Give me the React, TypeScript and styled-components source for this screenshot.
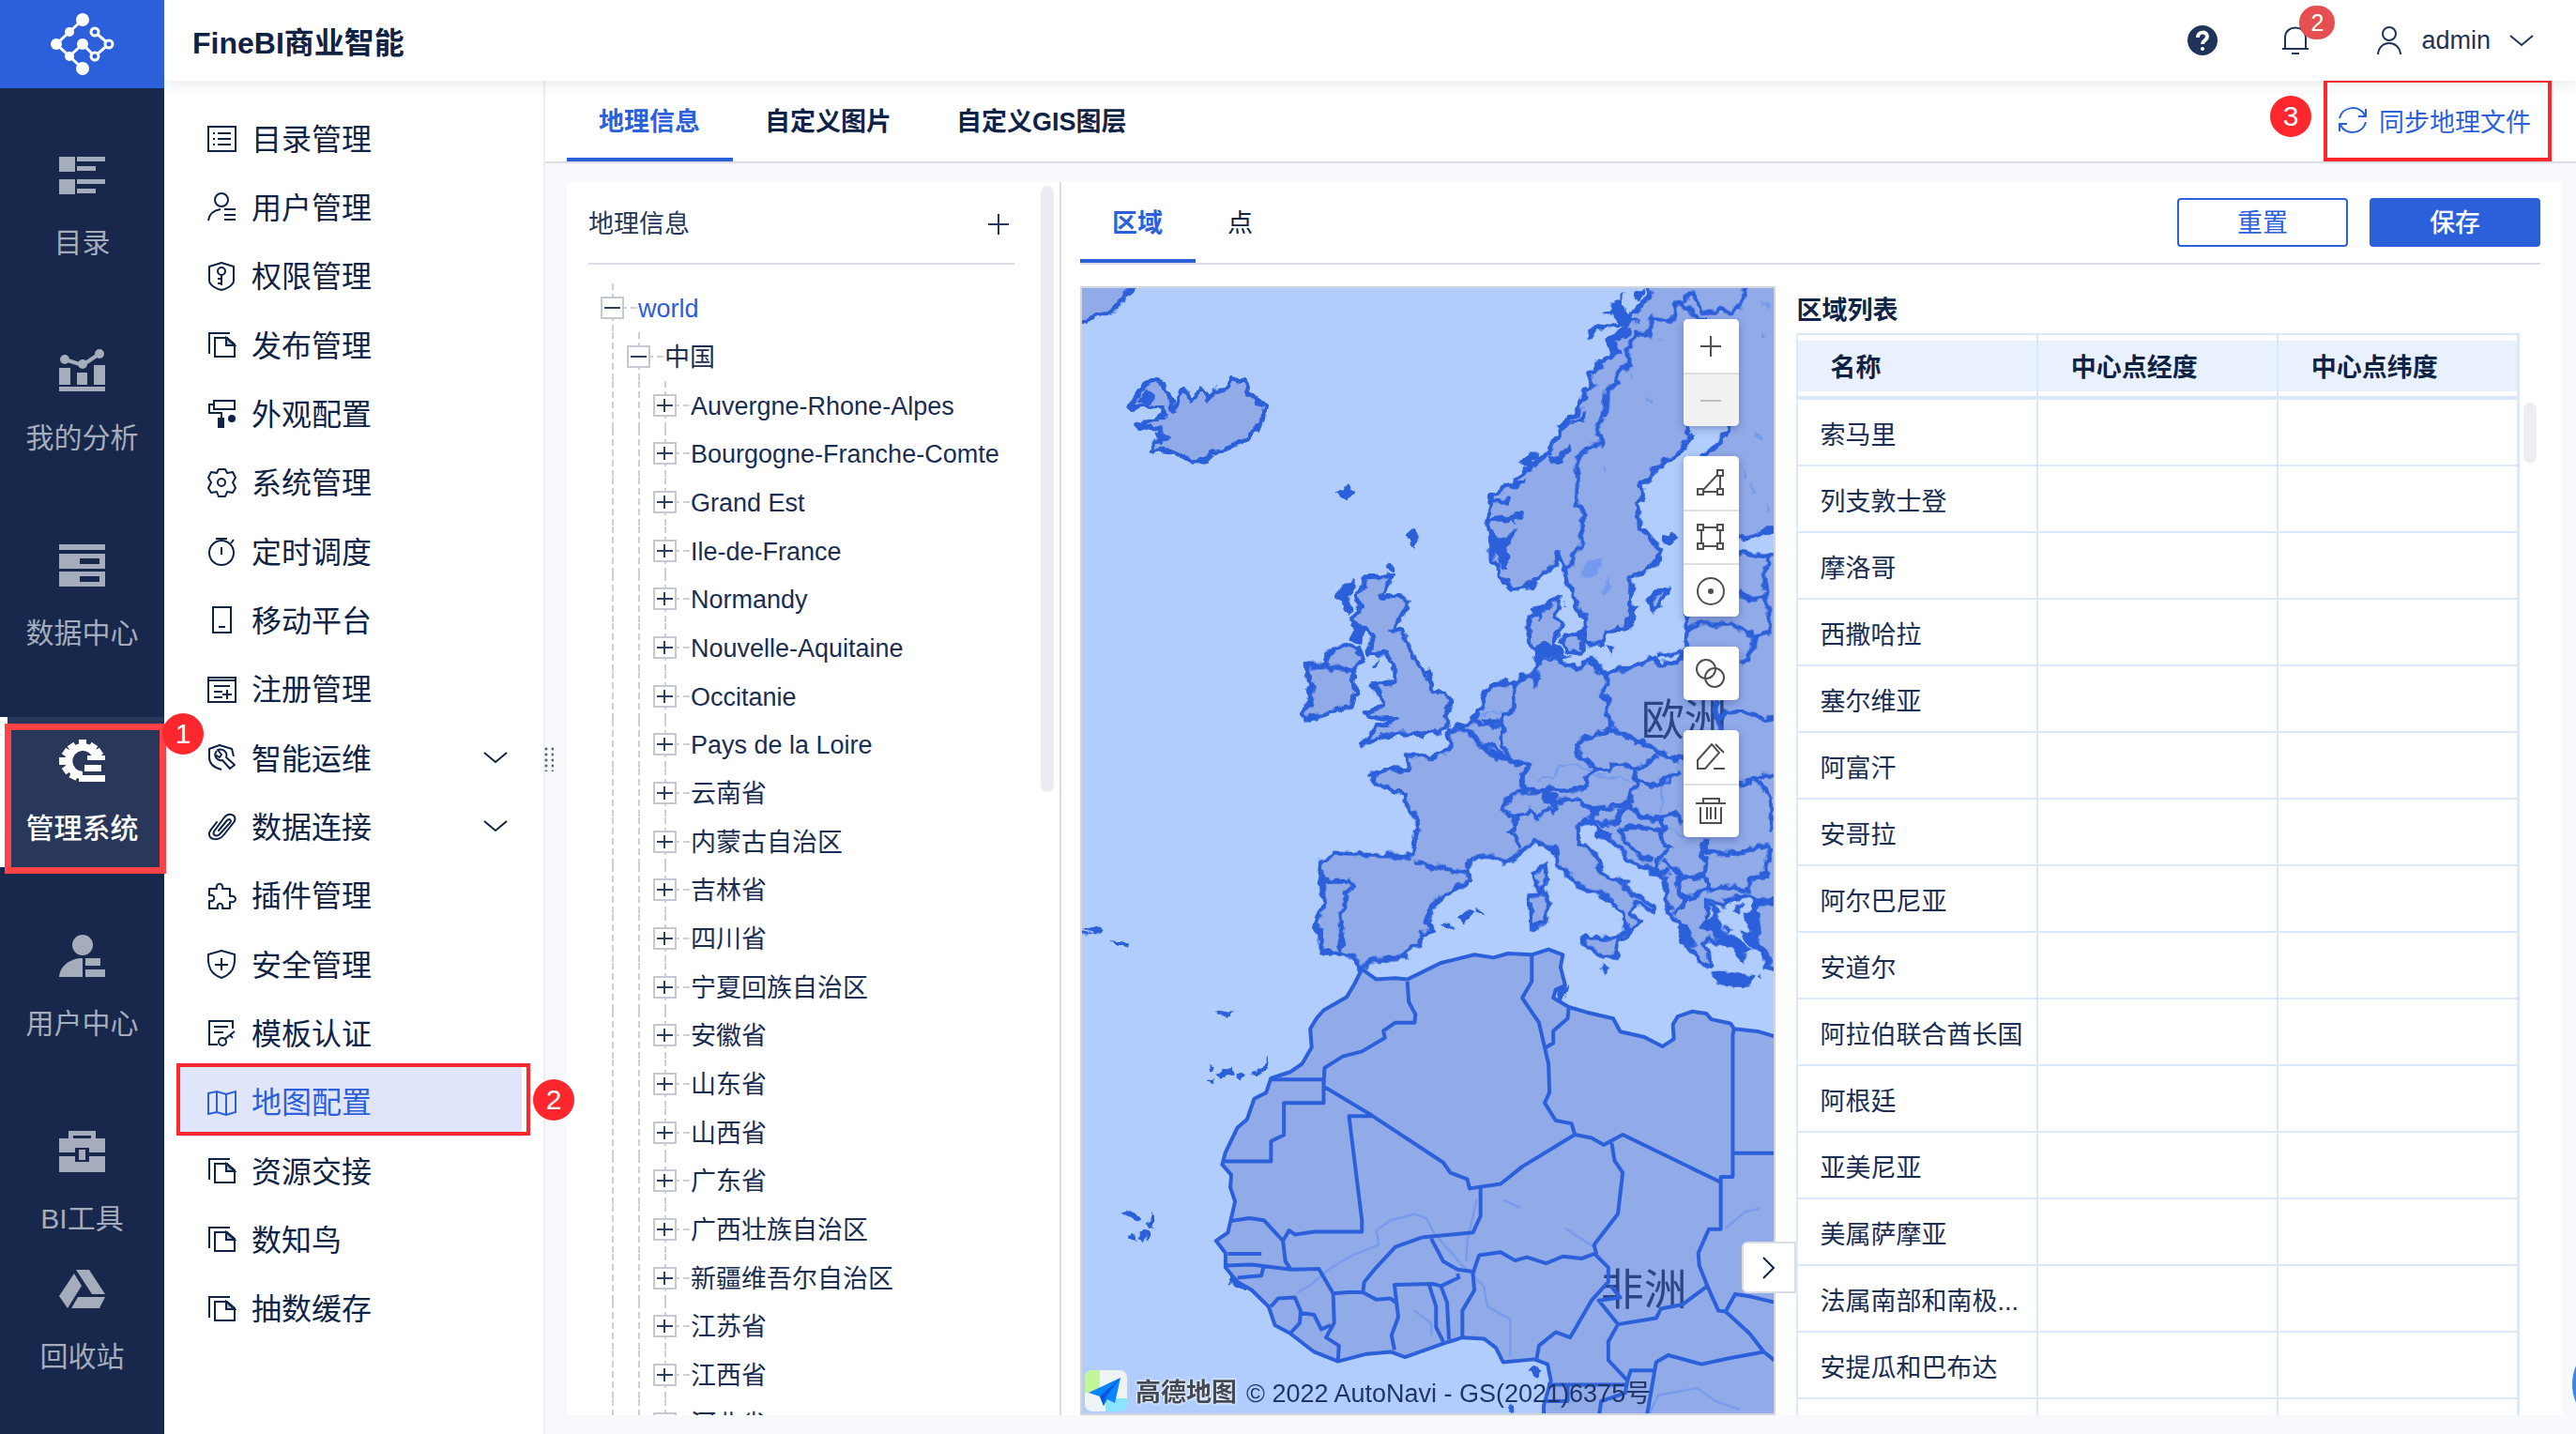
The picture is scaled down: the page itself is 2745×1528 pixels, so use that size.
import React from 'react';
import styled, { createGlobalStyle, css } from 'styled-components';

const blue = '#2c60db';
const navy = '#0f2347';
const red = '#ff272e';
const line = '#dadde6';
const grid = '#dbe8f9';

const Global = createGlobalStyle`
  *, *::before, *::after { box-sizing: border-box; }
  body { margin: 0; }
  body, button { font-family: "Liberation Sans", "Noto Sans CJK SC", sans-serif; }
  button { padding: 0; border: 0; background: none; color: inherit; font-size: 27px; cursor: pointer; }
  svg { display: block; flex: none; }
`;

const Page = styled.div`
  display: flex;
  height: 100vh;
  overflow: hidden;
  position: relative;
  background: #fff;
  color: ${navy};
  font-size: 27px;
  line-height: 40px;
`;

/* ---------- left rail ---------- */
const Rail = styled.nav`
  display: flex;
  flex-direction: column;
  flex: none;
  width: 175px;
  background: #17284c;
  position: relative;
  z-index: 3;
`;
const Brand = styled.div`
  display: grid;
  place-items: center;
  flex: none;
  height: 94px;
  margin-bottom: 46px;
  background: ${blue};
`;
const RailItem = styled.button<{ $on?: boolean; $tight?: boolean }>`
  position: relative;
  display: flex;
  flex-direction: column;
  align-items: center;
  flex: none;
  gap: 29px;
  height: 160px;
  padding-top: 24px;
  margin-bottom: ${p => (p.$tight ? '-13px' : '48px')};
  font-size: 30px;
  line-height: 40px;
  color: ${p => (p.$on ? '#fff' : '#a5adbc')};
  ${p => p.$on && css`
    background: #28375a;
    font-weight: 500;
    box-shadow: inset 8px 0 #fff;
  `}
`;

/* ---------- call-outs ---------- */
const Frame = styled.span<{ $t: number; $r: number; $b: number; $l: number; $w: number }>`
  position: absolute;
  top: ${p => p.$t}px;
  right: ${p => p.$r}px;
  bottom: ${p => p.$b}px;
  left: ${p => p.$l}px;
  border: ${p => p.$w}px solid ${p => (p.$w > 5 ? '#ff4246' : red)};
  pointer-events: none;
`;
const Step = styled.span<{ $x: number; $y: number }>`
  position: absolute;
  left: ${p => p.$x}px;
  top: ${p => p.$y}px;
  z-index: 4;
  width: 44px;
  height: 44px;
  border-radius: 50%;
  background: ${red};
  color: #fff;
  font-size: 30px;
  font-weight: 400;
  line-height: 44px;
  text-align: center;
`;

/* ---------- header ---------- */
const Body = styled.div`
  display: flex;
  flex-direction: column;
  flex: 1;
  min-width: 0;
`;
const Header = styled.header`
  display: flex;
  align-items: center;
  flex: none;
  height: 86px;
  padding: 0 45px 0 30px;
  background: #fff;
  box-shadow: 0 2px 18px rgba(30, 50, 80, 0.12);
  position: relative;
  z-index: 2;
`;
const Title = styled.h1`
  flex: 1;
  margin: 6px 0 0;
  font-size: 32px;
  line-height: 44px;
`;
const HeadIcon = styled.button`
  position: relative;
  margin-right: 69px;
`;
const Count = styled.span`
  position: absolute;
  left: 18px;
  top: -22px;
  width: 38px;
  height: 36px;
  border-radius: 18px;
  background: #e64f4f;
  color: #fff;
  font-size: 25px;
  line-height: 36px;
`;
const Account = styled.button`
  display: flex;
  align-items: center;
  gap: 20px;
  margin-left: 4px;
  color: #20345a;
`;

/* ---------- side menu ---------- */
const Row = styled.div`
  display: flex;
  flex: 1;
  min-height: 0;
`;
const Menu = styled.aside`
  position: relative;
  z-index: 1;
  flex: none;
  width: 406px;
  padding: 25px 23px 0 17px;
  border-right: 2px solid #eceef4;
`;
const MenuItem = styled.button<{ $on?: boolean }>`
  position: relative;
  display: flex;
  align-items: center;
  gap: 16px;
  width: 100%;
  height: 73px;
  padding: 0 15px 0 29px;
  font-size: 32px;
  text-align: left;
  color: ${p => (p.$on ? blue : navy)};
  background: ${p => (p.$on ? '#e0e5f9' : 'none')};
  &:nth-child(3n) { height: 74px; }
`;
const MenuText = styled.span`
  flex: 1;
  padding-bottom: 4px;
`;
const Grip = styled.span`
  position: absolute;
  right: -11px;
  top: 710px;
  width: 10px;
  height: 26px;
  background: radial-gradient(circle at 2px 2px, #5b6880 1px, transparent 2px) 0 0 / 7px 6px;
`;

/* ---------- main area ---------- */
const Main = styled.main`
  display: flex;
  flex-direction: column;
  flex: 1;
  min-width: 0;
  background: #f7f9fd;
`;
const TabBar = styled.div`
  display: flex;
  flex: none;
  height: 88px;
  padding: 0 48px 0 23px;
  background: #fff;
  border-bottom: 2px solid ${line};
`;
const Tab = styled.button<{ $on?: boolean; $plain?: boolean }>`
  padding: 0 35px 0 34px;
  font-weight: ${p => (p.$plain ? 400 : 700)};
  color: ${p => (p.$on ? blue : navy)};
  border-bottom: 4px solid ${p => (p.$on ? blue : 'transparent')};
`;
const Sync = styled.button`
  position: relative;
  display: flex;
  align-items: center;
  gap: 12px;
  padding-bottom: 2px;
  margin-left: auto;
  color: ${blue};
`;
const Panels = styled.div`
  display: flex;
  flex: 1;
  min-height: 0;
  margin: 20px 15px 20px 23px;
  background: #fff;
`;

/* ---------- tree ---------- */
const TreePanel = styled.section`
  display: flex;
  flex: none;
  width: 527px;
  padding: 0 6px 0 23px;
  border-right: 2px solid ${line};
`;
const TreeCol = styled.div`
  flex: 1;
  overflow: hidden;
`;
const TreeHead = styled.div`
  display: flex;
  align-items: center;
  justify-content: space-between;
  height: 88px;
  padding: 3px 5px 0 0;
  border-bottom: 2px solid ${line};
  color: #24365a;
`;
const Thumb = styled.div<{ $h: number }>`
  flex: none;
  width: 14px;
  height: ${p => p.$h}px;
  border-radius: 7px;
  background: #ecedf2;
`;
const TreeThumb = styled(Thumb)`
  margin: 4px 0 0 28px;
`;
const Tree = styled.ul`
  margin: 0;
  padding: 20px 0 0 13px;
  list-style: none;
  white-space: nowrap;
`;
const Node = styled.li`
  display: flex;
  align-items: center;
  height: 52px;
  &:nth-child(3n) { height: 51px; }
`;
const dashes = css`
  background: repeating-linear-gradient(#cdd0d6 0 7px, transparent 7px 11px) 12px 0 / 2px 100% no-repeat;
`;
const Guide = styled.span`
  align-self: stretch;
  width: 28px;
  ${dashes}
`;
const ToggleCell = styled.span`
  display: flex;
  align-items: center;
  align-self: stretch;
  ${dashes}
`;
const Toggle = styled.button`
  display: grid;
  place-items: center;
  width: 25px;
  height: 24px;
  border: 2px solid #c4c8d0;
  background: #fff;
`;
const Dash = styled.span`
  width: 14px;
  height: 2px;
  margin-right: 1px;
  background: linear-gradient(90deg, #cdd0d6 3px, transparent 3px 7px, #cdd0d6 7px);
`;
const Label = styled.span<{ $on?: boolean }>`
  padding-top: 2px;
  color: ${p => (p.$on ? blue : '#1a2d53')};
`;

/* ---------- right workspace ---------- */
const Work = styled.section`
  display: flex;
  flex-direction: column;
  flex: 1;
  min-width: 0;
  padding: 0 23px 0 20px;
`;
const WorkBar = styled.div`
  display: flex;
  flex: none;
  height: 88px;
  border-bottom: 2px solid ${line};
`;
const Actions = styled.div`
  display: flex;
  align-items: center;
  gap: 23px;
  margin-left: auto;
`;
const Action = styled.button<{ $primary?: boolean }>`
  width: 182px;
  height: 52px;
  padding-bottom: 3px;
  border: 2px solid ${blue};
  border-radius: 4px;
  background: ${p => (p.$primary ? blue : '#fff')};
  color: ${p => (p.$primary ? '#fff' : blue)};
  font-weight: ${p => (p.$primary ? 500 : 400)};
`;
const Split = styled.div`
  display: flex;
  flex: 1;
  min-height: 0;
  gap: 22px;
  padding-top: 23px;
`;
const MapBox = styled.div`
  position: relative;
  flex: 738 1 0;
  border: 2px solid #d2d5de;
`;
const MapSvg = styled.svg`
  width: 100%;
  height: 100%;
  background: #b1cdfe;
`;
const Tools = styled.div`
  position: absolute;
  top: 33px;
  right: 37px;
  display: flex;
  flex-direction: column;
  gap: 32px;
`;
const ToolGroup = styled.div`
  border-radius: 5px;
  overflow: hidden;
  background: #fff;
  box-shadow: 0 3px 10px rgba(20, 40, 100, 0.35);
`;
const Tool = styled.button<{ $off?: boolean }>`
  display: grid;
  place-items: center;
  width: 59px;
  height: 57px;
  color: ${p => (p.$off ? '#bdbdbd' : '#505050')};
  background: ${p => (p.$off ? '#f1f1f1' : '#fff')};
  & + & { border-top: 2px solid #dedfe2; }
`;
const Credit = styled.div`
  position: absolute;
  left: 3px;
  bottom: 1px;
  display: flex;
  align-items: center;
  white-space: nowrap;
  color: #1f3567;
`;
const CreditText = styled.span`
  padding-top: 6px;
`;
const Amap = styled.b`
  padding-top: 4px;
  margin: 0 10px 0 9px;
  color: #444a55;
  text-shadow: 0 0 3px #fff, 0 0 3px #fff;
`;
const Fold = styled.button`
  position: absolute;
  right: -24px;
  bottom: 128px;
  display: grid;
  place-items: center;
  width: 58px;
  height: 55px;
  border: 2px solid ${line};
  border-radius: 6px 0 0 6px;
  background: #fff;
`;
const ListCol = styled.div`
  display: flex;
  flex-direction: column;
  flex: 795 1 0;
  min-width: 0;
  overflow: hidden;
`;
const ListTitle = styled.h2`
  flex: none;
  margin: 6px 0 4px 1px;
  font-size: 27px;
  line-height: 40px;
`;
const ListRow = styled.div`
  display: grid;
  grid-template-columns: minmax(0, 1fr) auto;
  gap: 4px;
`;
const Table = styled.table`
  width: 100%;
  table-layout: fixed;
  border-spacing: 0;
  border: solid ${grid};
  border-width: 2px 1px 0 2px;
`;
const Th = styled.th`
  height: 69px;
  padding: 6px 0 5px;
  background: #e8f1fd content-box;
  border: solid ${grid};
  border-width: 0 2px 4px 0;
  text-align: left;
  text-indent: 35px;
  line-height: 54px;
`;
const ThText = styled.div`
  height: 54px;
  padding-top: 2px;
`;
const Td = styled.td`
  height: 71px;
  padding: 6px 12px 0 24px;
  border: solid ${grid};
  border-width: 0 2px 2px 0;
  overflow: hidden;
  white-space: nowrap;
  text-overflow: ellipsis;
  color: #1a2d53;
`;
const ListThumb = styled(Thumb)`
  margin: 74px 4px 0 0;
`;
const Bubble = styled.button`
  position: absolute;
  right: -96px;
  bottom: 3px;
  z-index: 5;
  width: 100px;
  height: 100px;
  border-radius: 50%;
  background: #3a84f0;
`;

/* ---------- icons ---------- */
type Kids = { children: React.ReactNode };
const RailSvg = ({ children }: Kids) => (
  <svg width="49" height="46" viewBox="0 0 49 46" fill="currentColor">{children}</svg>
);
const MenuSvg = ({ children }: Kids) => (
  <svg width="31" height="31" viewBox="0 0 31 31" fill="none" stroke="currentColor" strokeWidth="2">{children}</svg>
);
const ToolSvg = ({ children }: Kids) => (
  <svg width="34" height="34" viewBox="0 0 34 34" fill="none" stroke="currentColor" strokeWidth="2">{children}</svg>
);

const railItems = [
  { t: '目录', i: <path d="M0 3h17v16H0zM19 3h30v5H19zM19 13h20v5H19zM0 27h17v16H0zM19 27h30v5H19zM19 37h20v5H19z" /> },
  {
    t: '我的分析',
    i: (
      <>
        <path d="M0 20h12v18H0zM19 25h11v13H19zM37 17h12v21H37zM0 40h49v5H0z" />
        <path d="M6 11l19 6 18-12" fill="none" stroke="currentColor" strokeWidth="4" />
        <circle cx="6" cy="11" r="5" /><circle cx="25" cy="16" r="5" /><circle cx="43" cy="5" r="5" />
      </>
    ),
  },
  { t: '数据中心', i: <path fillRule="evenodd" d="M0 0h49v6H0zM0 10h49v16H0zM22 15v6h21v-6zM0 29h49v16H0zM22 34v6h21v-6z" /> },
  {
    t: '管理系统',
    i: (
      <>
        <g fill="none" stroke="currentColor">
          <path d="M40 20A15 15 0 1 0 25 38" strokeWidth="8" />
          <path d="M25 0v7M12 5l4 6M38 5l-4 6M5 12l6 4M45 12l-6 4M0 23h8M5 34l6-4M14 42l3-6M25 45v-7" strokeWidth="8" />
        </g>
        <path d="M30 17h19v5H30zM27 27h18v7H27zM25 38h24v7H25z" />
      </>
    ),
  },
  { t: '用户中心', i: <><circle cx="25" cy="11" r="11" /><path d="M0 45C1 33 12 25 25 25v20zM28 25h16v8H28zM28 37h21v8H28z" /></> },
  { t: 'BI工具', i: <path fillRule="evenodd" d="M10 9V1h29v8h10v15H32v-5H17v5H0V9zM15 9h19V6H15zM0 28h17v6h15v-6h17v17H0zM21 21h7v11h-7z" /> },
  { t: '回收站', i: <path d="M18 2h14l17 26H35zM16 6l8 13L9 43 0 30zM20 31h29l-6 12H13z" /> },
];

const pages = <><path d="M24 3H2v22M8 8h13l8 7v13H8z" /><path d="M20 8v8h9z" fill="currentColor" fillOpacity="0.3" /></>;
const menuItems = [
  { t: '目录管理', i: <><rect x="1" y="3" width="29" height="26" /><path d="M11 10h14M11 16h14M11 22h14M6 10h2M6 16h2M6 22h2" /></> },
  { t: '用户管理', i: <><circle cx="15" cy="8" r="7" /><path d="M1 30c1-7 6-11 13-12M18 18h12M18 24h12M18 29h12" /></> },
  { t: '权限管理', i: <><path d="M15 1l13 4v15c0 5-8 9-13 10C10 29 2 25 2 20V5z" /><circle cx="15" cy="10" r="4" /><path d="M15 14v11M11 18h4M11 23h4" /></> },
  { t: '发布管理', i: pages },
  { t: '外观配置', i: <><path d="M7 2h22v9H7zM7 6H2v9h13v6" /><path d="M12 21h5v9h-5z" fill="currentColor" /><circle cx="26" cy="21" r="3" fill="currentColor" /></> },
  { t: '系统管理', i: <><path d="M12 1h7l2 4 6-1 3 6-3 5 3 6-3 5-6-1-2 5h-7l-2-5-6 1-3-5 3-6-3-5 3-6 6 1z" strokeLinejoin="round" /><circle cx="15" cy="15" r="4" /></> },
  { t: '定时调度', i: <><circle cx="15" cy="17" r="13" /><path d="M15 11v8M9 2h12M25 7l3-4" /></> },
  { t: '移动平台', i: <path d="M6 2h19v27H6zM12 23h7" /> },
  { t: '注册管理', i: <path d="M1 3h29v26H1zM1 6h29M7 12h17M7 18h9M7 24h9M21 16v10M16 21h10" /> },
  { t: '智能运维', g: true, i: <path d="M15 28C7 26 2 22 2 15V6l11-4 13 4 2 8M10 8c-4 5 0 11 6 10l8 9 5-4-9-8c2-6-4-10-9-8l4 5-2 3-5-3" strokeLinejoin="round" /> },
  { t: '数据连接', g: true, i: <path d="M12 20l9-11c3-2 5 0 3 3L13 24c-3 3-8 1-6-3L18 6c5-6 13-3 11 4L18 24c-6 8-17 6-16-1 0-3 4-6 8-12" strokeLinecap="round" /> },
  { t: '插件管理', i: <path d="M2 8h8c-2-7 8-7 6 0h8v8c8-2 8 8 0 6v7h-8c2-7-7-7-5 0H2v-8c7 2 7-8 0-6z" strokeLinejoin="round" /> },
  { t: '安全管理', i: <><path d="M15 1l14 4c1 14-3 21-14 25C4 26 0 19 1 5z" /><path d="M15 9v13M8 16h14" /></> },
  { t: '模板认证', i: <><path d="M11 28H2V3h25v8M2 3v25M7 9h15M7 15h10" /><circle cx="16" cy="25" r="4" /><path d="M19 22l10-8M24 18l3 3" /></> },
  { t: '地图配置', on: true, i: <path d="M1 6l9-2 10 3 10-3v22l-10 3-10-3-9 2zM10 4v22M20 7v22" /> },
  { t: '资源交接', i: pages },
  { t: '数知鸟', i: pages },
  { t: '抽数缓存', i: pages },
];

const Chevron = () => (
  <svg width="26" height="13" viewBox="0 0 26 13" fill="none" stroke="currentColor" strokeWidth="2"><path d="M1 1l12 10L25 1" /></svg>
);

/* ---------- map drawing ---------- */
const LAND = '#91aae8';

const sheets = {
  north: 'translate(1130 180) scale(.5102 .4337)',
  south: 'translate(1130 840) scale(.5102 .4388)',
  nordic: 'translate(1580 300) scale(.33333)',
  balkan: 'translate(1580 700) scale(.33333)',
};
type Sheet = keyof typeof sheets;

/* coast: outline with a line; close: remaining fill boundary without a line */
const lands: { s: Sheet; coast: string; close?: string }[] = [
  { s: 'north', coast: 'M30 382L45 375 105 352 130 325 135 305 170 280', close: 'L30 280' },
  { s: 'north', coast: 'M145 585L175 530 205 520 225 545 235 600 258 540 275 568 295 535 310 565 322 545 350 535 358 515 385 525 392 545 400 560 427 585 422 620 400 655 365 680 318 700 298 720 255 710 232 690 192 695 190 670 222 662 205 640 160 630 218 608 215 590 175 582Z' },
  { s: 'north', coast: 'M640 1003L695 1000 668 1050 722 1052 726 1062 708 1110 690 1135 715 1140 735 1185 740 1205 768 1240 778 1285 805 1288 817 1308 805 1340 808 1368 790 1385 740 1390 700 1388 665 1400 630 1420 660 1370 690 1360 705 1350 665 1352 640 1340 672 1318 665 1290 655 1270 698 1262 697 1225 680 1190 645 1192 655 1150 632 1130 610 1110 628 1075 618 1050 632 1030Z' },
  { s: 'north', coast: 'M512 1220L550 1222 560 1190 590 1170 620 1178 632 1205 610 1235 615 1290 608 1320 560 1335 515 1355 505 1335 530 1310 515 1290 530 1270 515 1240Z' },
  { s: 'nordic', coast: 'M560 -10L540 18 520 60 475 110 455 150 405 190 425 230 395 245 362 275 345 295 345 330 330 350 312 400 300 425 270 455 240 490 205 550 160 590 120 620 85 655 30 680 20 740 15 765 25 800 28 900 48 910 52 945 80 965 95 985 150 975 200 930 232 912 243 870 262 915 270 960 300 1030 330 1085 335 1158 385 1160 390 1130 405 1115 455 1110 475 1040 478 945 515 925 550 905 570 860 528 800 503 790 498 715 515 690 512 650 545 615 560 590 640 540 668 490 655 465 690 400 750 360 790 465 745 530 705 555 690 620 700 740 780 800 830 820 870 810 925 795 960 790', close: 'L960 -10' },
  { s: 'north', coast: 'M722 1568L720 1540 690 1525 655 1508 648 1490 680 1475 735 1478 722 1440 775 1448 812 1425 812 1380 850 1365 875 1340 888 1290 905 1265 950 1262 960 1250 990 1250 1000 1215 980 1165 978 1105 1005 1085 1042 1048 1035 1100 1052 1118 1035 1150 1028 1190 1050 1215 1080 1225 1110 1210 1140 1240 1180 1228 1240 1200 1250 1218 1290 1210 1310 1180 1305 1110 1320 1060 1360 1000 1420 942 1450 950 1520 950', close: 'L1520 1570H722' },
  { s: 'south', coast: 'M722 42L740 60 752 100 742 110 735 165 680 165 620 162 575 158 540 178 548 225 550 290 530 340 545 355 545 400 585 400 610 410 630 437 660 415 720 412 735 385 752 380 755 355 775 345 765 310 795 265 855 225 852 180 872 165 884 168', close: 'L884 42' },
  { s: 'balkan', coast: 'M0 638L35 640 70 658 100 645 170 590 225 612 238 665 265 690 330 745 375 755 415 785 445 815 462 870 440 905 460 905 478 870 500 850 478 820 490 785 545 815 545 795 450 740 460 718 400 710 370 660 355 625 310 600 312 535 350 520 370 570 405 575 430 610 480 655 545 690 585 715 582 780 605 830 640 870 640 910 670 945 690 970 730 990 725 945 700 920 720 900 790 920 760 880 700 865 720 840 715 780 770 790 820 770 855 765 875 780 950 780', close: 'L950 478H0' },
  { s: 'balkan', coast: 'M960 790L880 790 850 830 880 860 850 890 890 930 915 960 910 1000 960 990' },
  { s: 'balkan', coast: 'M200 665L165 690 170 730 188 750 205 715ZM150 765L200 755 213 785 205 850 155 865 155 830ZM315 905L330 895 380 905 440 895 420 965 385 955 340 930ZM745 1015L860 1025 855 1045 800 1045 745 1030Z' },
  { s: 'nordic', coast: 'M255 1140L300 1125 325 1150 310 1190 270 1180ZM540 1055L535 1020 555 992 595 990 570 1015 568 1035Z' },
];
const africa = {
  coast: 'M1520 606L1488 602 1460 592 1408 585 1400 572 1360 562 1350 548 1320 543 1290 555 1280 575 1282 610 1258 628 1220 605 1170 592 1155 560 1100 545 1062 532 1045 520 1030 510 1035 490 1055 480 1045 435 1050 405 1020 392 985 405 935 402 905 412 865 405 795 425 725 465 700 462 660 465 630 440 615 475 598 508 550 540 535 560 522 585 525 630 505 670 480 690 440 705 430 740 405 755 390 805 370 825 345 885 338 915 357 940 355 970 365 1005 350 1080 325 1100 345 1130 345 1165 370 1200 400 1220 435 1260 448 1305 480 1325 530 1370 580 1393 640 1375 690 1370 720 1383 800 1350 840 1335 885 1338 910 1360 925 1395 990 1388 1018 1400 1025 1440 1010 1500 1010 1540',
  close: 'L1520 1540',
};

const borders: { s: Sheet; d: string }[] = [
  { s: 'nordic', d: 'M285 915L290 870 320 835 318 770 332 745 305 710 308 640 298 590 305 560 345 525 378 525 378 490 362 480 392 415 395 345 430 328 430 305 468 258 460 220 490 165 530 170 542 112 608 130 620 65 650 65M610 65L640 72 690 115 720 125M650 62L652 42 672 42 705 95 740 103 758 85 800 108 830 70 840 10M262 915L285 915M820 990L860 1018 905 1010 900 940 920 880M905 1010L915 1060 920 1120 870 1135 800 1095 690 1095 652 1112M870 1135L860 1180 828 1225M560 1200L600 1190 640 1182' },
  { s: 'balkan', d: 'M380 45L395 60 392 100 380 118 400 145 405 200 412 230M300 270L350 255 412 230 470 262 520 275 558 305 590 312 610 330 640 325M300 270L315 320 365 360 405 362 415 345 485 355 520 345 558 315M365 360L345 375 332 400 335 420 265 430 210 420 195 425M205 430L220 465 305 455 315 470 365 485 440 475 475 460 475 425 495 405 485 355M495 400L530 410 560 410 580 392 620 385 640 365' },
  { s: 'balkan', d: 'M65 495L90 450 125 428 195 425 200 455 230 475 225 495 205 485 180 515 155 490 140 505 100 510 65 495M100 510L105 540 90 560 105 575 105 600 125 610M85 330L150 345 128 380 128 420M-10 285L50 320 85 330 60 260 70 235 60 205 0 205M108 85L100 170 65 185 65 220' },
  { s: 'north', d: 'M838 1368L880 1415 905 1420 935 1455 975 1465M552 1222L580 1228 612 1232M860 1360L920 1370' },
  { s: 'balkan', d: 'M355 485L358 525 380 535 430 530 440 495 470 475 510 510 550 520 575 515 620 500 640 530M440 550L490 545 570 555 582 605 595 610 570 640 545 690M440 550L455 595 545 660M570 515L580 560M580 645L625 690 640 710 700 695M545 675L570 700 600 680M590 700L585 780 610 810M625 700L630 760 645 775 640 800 615 825M635 720L665 705 710 700 725 730 720 750 660 770 640 765M715 580L720 625 825 630 880 605 925 610M715 580L700 630 715 660 705 695M720 745L780 738 850 748 860 710 910 700 900 680 925 610M820 405L860 395 905 375 935 385M875 385L920 455 925 560M750 140L740 170 760 200 775 180 830 178 910 200 935 195M740 170L765 235' },
  { s: 'south', d: 'M735 180L800 195 855 208M550 225L600 225 615 240 598 255 595 290 582 310 590 350 583 400' },
];
const africaBorders =
  'M725 470L728 520 742 550 740 570 700 570 675 590 678 607 630 640 590 652 552 680 550 725 650 795 800 910 815 935 850 950 855 973 920 962 965 920 1075 842 1068 815 1035 808 1012 765 1022 740 1020 670 1012 630 1000 570 965 510 985 470 985 405' +
  'M1062 535L1060 560 1030 590 1030 620 1012 632M1075 842L1110 850 1135 867 1175 842 1380 958V945H1405V600L1408 585M1405 887H1500' +
  'M440 708H550V765H467V843L440 858V907H340M650 797H603L630 1050V1078H530L490 1085 478 1075 465 1100 425 1050 395 1045 355 1052' +
  'M878 973V1040L862 1080 755 1092M1152 862L1158 905 1175 935 1165 1035 1115 1110 1120 1130 1090 1143 1050 1138 1015 1155 975 1140 950 1148 920 1128 875 1135 862 1180 865 1220 840 1270V1335' +
  'M1380 958V1072H1355L1333 1130 1335 1160 1352 1210 1375 1270 1390 1272 1410 1230 1440 1235 1500 1252M1350 1212L1300 1255 1255 1265 1245 1288 1165 1303 1125 1245 1170 1238 1150 1210M1390 1272L1440 1325 1470 1370 1500 1398' +
  'M1470 1370L1400 1385 1340 1400 1270 1378 1245 1395 1242 1415 1192 1415 1185 1440 1145 1390V1345L1165 1303M1115 1130L1145 1165V1200L1110 1245 1065 1335 1035 1322 1000 1355 995 1388' +
  'M830 1180L832 1190 795 1210 808 1250 812 1340M770 1205L785 1260V1310L800 1345M698 1365L692 1330 706 1285 698 1207 780 1205 795 1210M755 1092L700 1115 660 1165 635 1200 632 1225 660 1243 690 1240 700 1250M775 1095L800 1150 830 1170 862 1175' +
  'M632 1225L600 1225 570 1228 572 1300 555 1335 582 1355 580 1392M465 1100L470 1150 482 1170 540 1168 570 1228M345 1160L400 1158 482 1170M370 1190L420 1185 425 1160M350 1132H420M440 1260L455 1240 490 1238 502 1270 500 1300 480 1325M502 1275L530 1280 545 1315 565 1305' +
  'M1018 1450H1180M1185 1440L1180 1470 1130 1490 1125 1530M1245 1395L1225 1530M1060 1450V1490H1015';

const rivers: { s: Sheet; d: string }[] = [
  { s: 'south', d: 'M495 1225L520 1210 560 1170 610 1135 665 1110 660 1075 690 1050 740 1035 765 1045 780 1080 840 1160 885 1210 892 1260 940 1290V1380M870 1000L850 1100 848 1150M1230 1520L1250 1475 1330 1458 1370 1490 1420 1510M1390 1070L1430 1030 1460 1022M740 1270L775 1300V1330M925 1000L960 1020M1055 1070L1115 1115' },
  { s: 'balkan', d: 'M170 395L215 385 245 355 300 345 345 362 370 380 430 390 485 395M573 405L568 500M0 185L60 175M590 548L640 575' },
];
const specks =
  'M310 930l40-45 25 5-10 50-45 10zM380 990l25-50 5 10-20 55zM870 480l25 15-10 20zM890 60l30 10-20 15zM520 370l25 10-10 15zM830 590l20 25-10 20zM860 640l10 40-10 5zM895 160l15 15-10 5zM385 590l15 10-12 8zM900 700l20 30-8 5zM470 290l8 15-6 4zM560 180l30 15-20-5z';

/* small islands and fjords, painted in the line colour */
const islets: { s: Sheet; d: string }[] = [
  { s: 'north', d: 'M575 800l15-8 10-20 13 22-13 18zM722 905l18-20 8 15-6 32zM683 970l18 8-5 12-14-6zM615 1005l-30 22-12 28 14 15 15 30 10-20-12-30 15-20zM610 1110l30 20-15 40-20-15zM650 1225l15-25-5 30zM1190 1075l15 0-15 60zM195 645l30 15-15 20zM160 570l20-30 20 20-15 20zM770 1240l8 45-15-25z' },
  { s: 'nordic', d: 'M328 185l8-25 36-22 30 5 55-25 50 5-35 15-110 25zM385 102l68-68-10 40 30 40-40 20-12-30zM485 32l40-14-22 45-20-8zM490 1035l-10 70-18 8 14-60zM580 815l20-8 27 15-42 22zM395 1165l32 8-15 18zM18 695h70v15h-70zM15 755l110-20 10 20-30 10 5 20-15-20-75 5zM28 800l30 15 58-20-40 60 10 60-25 0-32-60zM80 645l65-12-5 20-60 8zM205 560l40-10 30-32 10 20-35 40-40 5zM235 458l30-20 25 10 45-35-5 25-60 20-10 15zM345 330l32-5-30 20zM400 180l70-30-5 30-40 10 20 45-20-5zM365 250l65-12-45 20zM120 580l30-35 30 0 5 20-25 10 10 25-30-10zM150 1045l45-10-10 50-20-20zM255 1035l10-5 3 10zM300 1110l35-10v60l-35-10zM155 1180l40-30 30 20 15-20 20 40 30 10h-120z' },
  { s: 'balkan', d: 'M170 0h120l-40 12-50-8-30 20zM345 0h20l12 60-30-30zM375 980l33 25-15 8zM635 860l25 0 20 70-30-15-20-30zM660 920l30 30 45 50-20-10-30-20zM700 860l50-40 25 60 60 30 30 30-40 10-60-40zM715 780l50 30-25 20zM770 770l60 0-20 15-30 5zM800 810l30-20v30zM840 820l30-15 25 40-15 60-30-30zM820 880l60 10 20 50-40-10zM800 930l40 20-10 30-20-20zM890 930l35 20v50l-25-20zM770 860l30 10-20 15zM360 540l50 20-5 30-30-25-10 15zM480 650l50 15-10 15zM740 1005l40 15h90l-10 28-70 0-45-15zM885 1010l8 20-15-5zM20 85l50 0-60 40-10 20zM150 65l30-30 10 40-25 25zM470 250l50 20-35 15zM195 420l40 20 10 40-30 0z' },
  { s: 'south', d: 'M45 345l35-10 10 15-20 5zM45 350l20 5-20 3zM105 363l32 8-2 12-18-2zM328 540l34 8-32 7zM300 708l22-5-5 14zM312 670l12 12-10 10zM328 695l30-16 5 15-25 15zM366 690l16 5-6 18-10-3zM395 698l18-10 18-34 2 16-18 32zM122 1030l20-5 28 20-10 8zM182 1060l7-36 10 45zM160 1075l28-2-3 28-10-8-5 8-10-8zM142 1095l14-8 2 15zM982 1420l10-20 16 12-12 16zM932 1510l10-14 2 18zM828 315l24-22 12 10-15 22zM865 288l22 12-18 4zM798 335l12-15 12 28zM345 1128l30-4 45 6 4 6-20 8-59 4zM350 1180l45 10-10 30-30-15zM1035 490l25-12-5 25-12 20zM530 330l20 10v20z' },
];

const stroke = { fill: 'none', strokeLinejoin: 'round' as const };
const Ln = ({ d, s, color = blue, w = 4 }: { d: string; s: Sheet; color?: string; w?: number }) => (
  <path transform={sheets[s]} d={d} {...stroke} stroke={color} strokeWidth={w} vectorEffect="non-scaling-stroke" />
);

const WorldMap = () => (
  <MapSvg viewBox="1153 307 737 1200" preserveAspectRatio="xMinYMin slice" role="img" aria-label="world">
    <defs>
      <filter id="rough" x="-2%" y="-2%" width="104%" height="104%" colorInterpolationFilters="sRGB">
        <feTurbulence type="fractalNoise" baseFrequency="0.09" numOctaves="2" seed="4" />
        <feDisplacementMap in="SourceGraphic" scale="11" xChannelSelector="R" yChannelSelector="G" />
      </filter>
    </defs>
    <g filter="url(#rough)">
      {lands.map((l, i) => <path key={i} transform={sheets[l.s]} d={l.coast + (l.close ?? '')} fill={LAND} />)}
      <path transform={sheets.nordic} d={specks} fill="#739aee" />
      <Ln s="balkan" d={rivers[1].d} color="#739aee" w={2} />
      {lands.map((l, i) => <Ln key={i} s={l.s} d={l.coast} w={5} />)}
      {borders.map((b, i) => <Ln key={i} s={b.s} d={b.d} w={5} />)}
      {islets.map((b, i) => <path key={i} transform={sheets[b.s]} d={b.d} fill={blue} />)}
    </g>
    <path transform={sheets.south} d={africa.coast + africa.close} fill={LAND} />
    <Ln s="south" d={rivers[0].d} color="#739aee" w={2} />
    <g fill="#2a4687" fontSize="46" fontFamily='"Noto Sans CJK SC", sans-serif'>
      <text x="1749" y="783">欧洲</text>
      <text x="1706" y="1391">非洲</text>
    </g>
    <Ln s="south" d={africa.coast} />
    <Ln s="south" d={africaBorders} />
    <Ln s="balkan" d="M750 140L740 170 760 200 775 180M740 170L765 235" />
  </MapSvg>
);

/* ---------- data ---------- */
const tree = [
  ['world', 0], ['中国', 1],
  ...['Auvergne-Rhone-Alpes', 'Bourgogne-Franche-Comte', 'Grand Est', 'Ile-de-France', 'Normandy', 'Nouvelle-Aquitaine', 'Occitanie', 'Pays de la Loire', '云南省', '内蒙古自治区', '吉林省', '四川省', '宁夏回族自治区', '安徽省', '山东省', '山西省', '广东省', '广西壮族自治区', '新疆维吾尔自治区', '江苏省', '江西省', '河北省'].map(n => [n, 2]),
] as [string, number][];

const regions = ['索马里', '列支敦士登', '摩洛哥', '西撒哈拉', '塞尔维亚', '阿富汗', '安哥拉', '阿尔巴尼亚', '安道尔', '阿拉伯联合酋长国', '阿根廷', '亚美尼亚', '美属萨摩亚', '法属南部和南极...', '安提瓜和巴布达', ''];

type ToolDef = { n: string; off?: boolean; i: React.ReactNode };
const toolGroups: ToolDef[][] = [
  [
    { n: '放大', i: <path d="M17 6v22M6 17h22" /> },
    { n: '缩小', off: true, i: <path d="M6 17h22" /> },
  ],
  [
    { n: '多边形', i: <path d="M9 24L24 8M27 9v14M9 26h16M24 3h6v6h-6zM3 23h6v6H3zM24 23h6v6h-6z" /> },
    { n: '矩形', i: <path d="M7 9v14M27 9v14M10 6h14M10 26h14M3 3h6v6H3zM24 3h6v6h-6zM3 23h6v6H3zM24 23h6v6h-6z" /> },
    { n: '圆形', i: <><circle cx="17" cy="17" r="14" /><circle cx="17" cy="17" r="2" fill="currentColor" /></> },
  ],
  [{ n: '合并', i: <><circle cx="12" cy="12" r="10" /><circle cx="21" cy="21" r="10" /></> }],
  [
    { n: '编辑', i: <path d="M3 29V20L18 3l8 9-15 17zM20 29h12M22 3l9 9" /> },
    { n: '删除', i: <path d="M1 8h32M9 8V3h17v5M6 12v17h22V12M13 12v13M17 12v13M22 12v13" /> },
  ],
];

export default function App() {
  return (
    <Page>
      <Global />
      <Rail>
        <Brand>
          <svg width="68" height="66" viewBox="53 13 68 66" fill="#fff" stroke="#fff" strokeWidth="3">
            <path d="M87 20L59 46l28 26M73 59l14-13 13 13 15-13-15-13" fill="none" />
            <g stroke="none">
              <circle cx="87" cy="20" r="7" /><circle cx="73" cy="33" r="5" /><circle cx="59" cy="46" r="6" />
              <circle cx="87" cy="46" r="6" /><circle cx="73" cy="59" r="5" /><circle cx="87" cy="72" r="7" />
            </g>
            <g fill={blue}><circle cx="100" cy="33" r="4" /><circle cx="115" cy="46" r="4" /><circle cx="100" cy="59" r="4" /></g>
          </svg>
        </Brand>
        {railItems.map((r, i) => (
          <RailItem key={r.t} $on={i === 3} $tight={i === 5}>
            <RailSvg>{r.i}</RailSvg>
            {r.t}
            {i === 3 && <><Step $x={173} $y={-4}>1</Step><Frame $t={7} $r={-2} $b={-7} $l={5} $w={7} /></>}
          </RailItem>
        ))}
      </Rail>

      <Body>
        <Header>
          <Title>FineBI商业智能</Title>
          <HeadIcon aria-label="帮助">
            <svg width="32" height="32" viewBox="0 0 32 32">
              <circle cx="16" cy="16" r="16" fill="#20345a" />
              <path d="M11 13c0-7 10-7 10-1 0 4-5 4-5 8" fill="none" stroke="#fff" strokeWidth="4" />
              <circle cx="16" cy="25" r="2" fill="#fff" />
            </svg>
          </HeadIcon>
          <HeadIcon aria-label="消息">
            <svg width="28" height="30" viewBox="0 0 28 30" fill="none" stroke="#20345a" strokeWidth="2">
              <path d="M3 23V12C3-2 25-2 25 12v11M0 24h28M10 29h8" />
            </svg>
            <Count>2</Count>
          </HeadIcon>
          <Account>
            <svg width="27" height="30" viewBox="0 0 27 30" fill="none" stroke="currentColor" strokeWidth="2">
              <circle cx="13" cy="8" r="7" /><path d="M1 30c1-16 23-16 24 0" />
            </svg>
            admin
            <Chevron />
          </Account>
        </Header>

        <Row>
          <Menu>
            {menuItems.map(m => (
              <MenuItem key={m.t} $on={m.on}>
                <MenuSvg>{m.i}</MenuSvg>
                <MenuText>{m.t}</MenuText>
                {m.g && <Chevron />}
                {m.on && <><Frame $t={-4} $r={-9} $b={1} $l={-4} $w={4} /><Step $x={376} $y={13}>2</Step></>}
              </MenuItem>
            ))}
            <Grip />
          </Menu>

          <Main>
            <TabBar>
              <Tab $on>地理信息</Tab>
              <Tab>自定义图片</Tab>
              <Tab>自定义GIS图层</Tab>
              <Sync>
                <svg width="32" height="28" viewBox="0 0 32 28" fill="none" stroke="currentColor" strokeWidth="2">
                  <path d="M2 12C5-1 24-3 29 9M30 2v8h-8M30 16C27 29 8 31 3 19M2 26v-8h8" />
                </svg>
                同步地理文件
                <Step $x={-72} $y={16}>3</Step>
                <Frame $t={-2} $r={-22} $b={0} $l={-15} $w={4} />
              </Sync>
            </TabBar>

            <Panels>
              <TreePanel>
                <TreeCol>
                  <TreeHead>
                    地理信息
                    <button aria-label="添加">
                      <svg width="24" height="24" viewBox="0 0 24 24" fill="none" stroke="currentColor" strokeWidth="2"><path d="M12 1v22M1 12h22" /></svg>
                    </button>
                  </TreeHead>
                  <Tree>
                    {tree.map(([name, level]) => (
                      <Node key={name}>
                        {Array.from({ length: level }, (_, i) => <Guide key={i} />)}
                        <ToggleCell>
                          <Toggle aria-label={name}>
                            <svg width="17" height="16" viewBox="0 0 17 16" fill="none" stroke="#2d4062" strokeWidth="2">
                              <path d={level < 2 ? 'M0 8h17' : 'M0 8h17M8 1v14'} />
                            </svg>
                          </Toggle>
                        </ToggleCell>
                        <Dash />
                        <Label $on={level === 0}>{name}</Label>
                      </Node>
                    ))}
                  </Tree>
                </TreeCol>
                <TreeThumb $h={646} />
              </TreePanel>

              <Work>
                <WorkBar>
                  <Tab $on>区域</Tab>
                  <Tab $plain>点</Tab>
                  <Actions>
                    <Action>重置</Action>
                    <Action $primary>保存</Action>
                  </Actions>
                </WorkBar>
                <Split>
                  <MapBox>
                    <WorldMap />
                    <Tools>
                      {toolGroups.map((g, i) => (
                        <ToolGroup key={i}>
                          {g.map(t => <Tool key={t.n} $off={t.off} aria-label={t.n}><ToolSvg>{t.i}</ToolSvg></Tool>)}
                        </ToolGroup>
                      ))}
                    </Tools>
                    <Credit>
                      <svg width="45" height="44" viewBox="0 0 45 44">
                        <rect width="45" height="44" rx="8" fill="#eef3f3" />
                        <path d="M8 0h8v24H0V8q0-8 8-8z" fill="#c3f59b" />
                        <path d="M22 30h23v6q0 8-8 8H22z" fill="#8be4ff" />
                        <path d="M38 8L4 24l12 4 4 10 4-7 8 4z" fill="#0a84ff" />
                        <path d="M38 8L16 28l4 10 2-9z" fill="#0559d8" />
                      </svg>
                      <Amap>高德地图</Amap>
                      <CreditText>© 2022 AutoNavi - GS(2021)6375号</CreditText>
                    </Credit>
                    <Fold aria-label="收起">
                      <svg width="14" height="24" viewBox="0 0 14 24" fill="none" stroke={navy} strokeWidth="2"><path d="M1 1l11 11L1 23" /></svg>
                    </Fold>
                  </MapBox>

                  <ListCol>
                    <ListTitle>区域列表</ListTitle>
                    <ListRow>
                      <Table>
                        <thead>
                          <tr>
                            {['名称', '中心点经度', '中心点纬度'].map(h => <Th key={h}><ThText>{h}</ThText></Th>)}
                          </tr>
                        </thead>
                        <tbody>
                          {regions.map(r => <tr key={r}><Td>{r}</Td><Td /><Td /></tr>)}
                        </tbody>
                      </Table>
                      <ListThumb $h={64} />
                    </ListRow>
                  </ListCol>
                </Split>
              </Work>
            </Panels>
          </Main>
        </Row>
      </Body>
      <Bubble aria-label="客服" />
    </Page>
  );
}
